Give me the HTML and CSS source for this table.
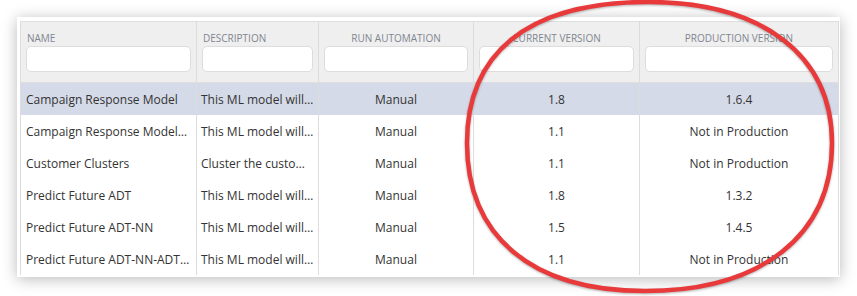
FILE: index.html
```html
<!DOCTYPE html>
<html lang="en">
<head>
<meta charset="utf-8">
<title>ML Models</title>
<link rel="stylesheet" href="styles.css">
</head>
<body>
<div class="card">
  <div class="grid">
    <div class="hcell left"><span class="hlabel">Name</span><input class="filter" type="text"></div>
    <div class="hcell left"><span class="hlabel">Description</span><input class="filter" type="text"></div>
    <div class="hcell"><span class="hlabel">Run Automation</span><input class="filter" type="text"></div>
    <div class="hcell"><span class="hlabel">Current Version</span><input class="filter" type="text"></div>
    <div class="hcell last"><span class="hlabel">Production Version</span><input class="filter" type="text"></div>

    <div class="row selected">
      <div class="cell left">Campaign Response Model</div>
      <div class="cell left desc">This ML model will…</div>
      <div class="cell">Manual</div>
      <div class="cell">1.8</div>
      <div class="cell last">1.6.4</div>
    </div>
    <div class="row">
      <div class="cell left">Campaign Response Model…</div>
      <div class="cell left desc">This ML model will…</div>
      <div class="cell">Manual</div>
      <div class="cell">1.1</div>
      <div class="cell last">Not in Production</div>
    </div>
    <div class="row">
      <div class="cell left">Customer Clusters</div>
      <div class="cell left desc">Cluster the custo…</div>
      <div class="cell">Manual</div>
      <div class="cell">1.1</div>
      <div class="cell last">Not in Production</div>
    </div>
    <div class="row">
      <div class="cell left">Predict Future ADT</div>
      <div class="cell left desc">This ML model will…</div>
      <div class="cell">Manual</div>
      <div class="cell">1.8</div>
      <div class="cell last">1.3.2</div>
    </div>
    <div class="row">
      <div class="cell left">Predict Future ADT-NN</div>
      <div class="cell left desc">This ML model will…</div>
      <div class="cell">Manual</div>
      <div class="cell">1.5</div>
      <div class="cell last">1.4.5</div>
    </div>
    <div class="row">
      <div class="cell left">Predict Future ADT-NN-ADT…</div>
      <div class="cell left desc">This ML model will…</div>
      <div class="cell">Manual</div>
      <div class="cell">1.1</div>
      <div class="cell last">Not in Production</div>
    </div>
  </div>
</div>
<svg class="annotation" width="857" height="296" viewBox="0 0 857 296" aria-hidden="true">
  <path d="M648 2 C762 2 832 55 832 143 C832 235 762 291 645 291 C530 291 467 235 467 143 C467 55 525 2 648 2 Z" fill="none" stroke="#e83a3b" stroke-width="4.5"/>
</svg>
</body>
</html>
```

FILE: styles.css
```css
html, body {
  margin: 0;
  padding: 0;
  background: #ffffff;
}

body {
  font-family: "Open Sans", "Noto Sans", sans-serif;
  font-size: 12px;
  color: #333333;
  width: 857px;
  height: 296px;
  overflow: hidden;
  position: relative;
}

.card {
  margin: 17px 0 0 17px;
  width: 823px;
  height: 260px;
  box-sizing: border-box;
  padding: 4px 1px 2px 3px;
  background: #ffffff;
  box-shadow: 0 2px 14px rgba(0, 0, 0, 0.28);
}

.grid {
  display: grid;
  grid-template-columns: 176px 122px 155px 166px 200px;
}

.row {
  display: contents;
}

.hcell {
  display: flex;
  flex-direction: column;
  align-items: stretch;
  gap: 1px;
  padding: 9px 5px 10px 5px;
  background: #efefef;
  border-top: 1px solid #dedede;
  border-bottom: 1px solid #dedede;
  border-left: 1px solid #dcdcdc;
  text-align: center;
}

.hcell.left {
  text-align: left;
}

.hlabel {
  font-size: 10px;
  line-height: 14px;
  text-transform: uppercase;
  color: #80868f;
  white-space: nowrap;
}

.hcell.left .hlabel {
  padding-left: 1px;
}

.filter {
  display: block;
  box-sizing: border-box;
  width: 100%;
  height: 26px;
  margin: 0;
  padding: 0 6px;
  border: 1px solid #dddddd;
  border-radius: 5px;
  background: #ffffff;
  font: inherit;
}

.last {
  border-right: 1px solid #dcdcdc;
}

.cell {
  box-sizing: border-box;
  height: 32px;
  padding: 2px 5px 0 5px;
  line-height: 30px;
  border-left: 1px solid #dcdcdc;
  text-align: center;
  white-space: nowrap;
  overflow: hidden;
  text-overflow: clip;
}

.cell.left {
  text-align: left;
}

.cell.desc {
  padding-left: 4px;
  padding-right: 1px;
}

.row.selected .cell {
  background: #d5dae8;
}

.annotation {
  position: absolute;
  left: 0;
  top: 0;
  pointer-events: none;
  filter: drop-shadow(0 1px 1px rgba(0, 0, 0, 0.3));
}
```
